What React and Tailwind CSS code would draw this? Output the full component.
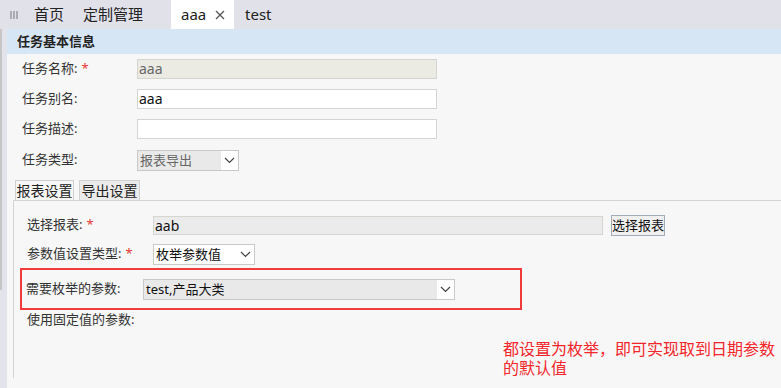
import React from 'react';

const font = { fontFamily: '"Noto Sans", "Noto Sans CJK SC", sans-serif' };
const noteFont = { fontFamily: '"Liberation Sans", "Noto Sans CJK SC", sans-serif' };

const Chevron = () => (
  <svg width="11" height="7" viewBox="0 0 11 7" fill="none">
    <path d="M1 1l4.5 4.5L10 1" stroke="#444" strokeWidth="1.2" />
  </svg>
);

const Select = ({ value, width, light, dark }) => (
  <div
    className={`flex h-[21px] items-stretch border border-[#c9c9c9] ${light ? 'bg-white' : 'bg-[#e9e9e9]'}`}
    style={{ width }}
  >
    <span className={`flex-1 truncate pl-[2px] text-[13px] leading-[19px] ${light || dark ? 'text-[#111]' : 'text-[#666]'}`}>{value}</span>
    <span className="flex w-[17px] items-center justify-center bg-white">
      <Chevron />
    </span>
  </div>
);

const Label = ({ children, required, width }) => (
  <div className="flex shrink-0 items-center text-[13px] text-[#333]" style={{ width }}>
    {children}
    {required && <span className="ml-[4px] text-[#e53935]">*</span>}
  </div>
);

export default function App() {
  return (
    <div className="flex h-[388px] w-[781px] overflow-hidden bg-[#f7f7f7]" style={font}>
      {/* left strip */}
      <div className="flex w-[7px] shrink-0 flex-col bg-[#e3e3eb]">
        <div className="mt-[12px] h-[278px] w-[2px] bg-[#c6c6c6]" />
      </div>

      <div className="flex min-w-0 flex-1 flex-col">
        {/* top tabs */}
        <div className="-ml-[7px] flex h-[29px] shrink-0 items-stretch bg-[#e1e1ea] text-[15px] text-[#222]">
          <div className="ml-[3px] flex w-[27px] items-center pl-[7px]">
            <svg width="8" height="8" viewBox="0 0 8 8">
              <path d="M1 0v8M4 0v8M7 0v8" stroke="#777" strokeWidth="1" />
            </svg>
          </div>
          <div className="flex items-center pl-[4px] pr-[19px]">首页</div>
          <div className="flex items-center pr-[28px]">定制管理</div>
          <div className="flex w-[63px] items-center bg-white pl-[10px]">
            aaa
            <svg className="ml-[9px]" width="10" height="10" viewBox="0 0 10 10">
              <path d="M1 1l8 8M9 1l-8 8" stroke="#555" strokeWidth="1.3" />
            </svg>
          </div>
          <div className="flex items-center pl-[11px]">test</div>
        </div>

        {/* section header */}
        <div className="flex h-[25px] shrink-0 items-center bg-[#d6e6f5] pl-[10px] text-[13px] font-bold text-[#222]">
          任务基本信息
        </div>

        {/* base info rows */}
        <div className="flex flex-col pl-[15px]">
          <div className="flex h-[30px] items-center">
            <Label required width="115px">任务名称:</Label>
            <div className="h-[20px] w-[300px] border border-[#d4d4d0] bg-[#ebebe4] pl-[1px] text-[14px] leading-[18px] text-[#666]">aaa</div>
          </div>
          <div className="flex h-[30px] items-center">
            <Label width="115px">任务别名:</Label>
            <div className="h-[20px] w-[300px] border border-[#d4d4d4] bg-white pl-[1px] text-[14px] leading-[18px] text-[#111]">aaa</div>
          </div>
          <div className="flex h-[30px] items-center">
            <Label width="115px">任务描述:</Label>
            <div className="h-[20px] w-[300px] border border-[#d4d4d4] bg-white" />
          </div>
          <div className="flex h-[32px] items-center">
            <Label width="115px">任务类型:</Label>
            <Select value="报表导出" width="102px" />
          </div>
        </div>

        {/* sub tabs */}
        <div className="ml-[6px] mt-[4px] flex flex-col">
          <div className="flex items-end gap-[5px] pl-[2px]">
            <div className="-mb-px h-[21px] w-[59px] border border-b-0 border-[#d0d0d0] bg-[#f7f7f7] text-center text-[14px] leading-[20px] text-[#222]">
              报表设置
            </div>
            <div className="h-[20px] w-[61px] border border-b-0 border-[#d0d0d0] bg-[#ebebeb] text-center text-[14px] leading-[20px] text-[#222]">
              导出设置
            </div>
          </div>

          <div className="flex flex-col border-l border-t border-[#d4d4d4] pt-[9px]">
            <div className="flex h-[30px] items-center pl-[13px]">
              <Label required width="126px">选择报表:</Label>
              <div className="h-[19px] w-[450px] border border-[#d6d6d0] bg-[#ebebeb] pl-[1px] text-[14px] leading-[17px] text-[#111]">aab</div>
              <button className="ml-[8px] h-[21px] w-[54px] whitespace-nowrap border border-[#a3adb8] bg-[#f0f0f0] p-0 text-[13px] leading-[19px] text-[#111]">
                选择报表
              </button>
            </div>
            <div className="flex h-[28px] items-center pl-[13px]">
              <Label required width="126px">参数值设置类型:</Label>
              <Select value="枚举参数值" width="102px" light />
            </div>

            <div className="ml-[6px] flex h-[42px] w-[502px] items-center border-2 border-[#f23a3a] pl-[4px]">
              <Label width="117px">需要枚举的参数:</Label>
              <Select value="test,产品大类" width="312px" dark />
            </div>

            <div className="flex h-[20px] items-center pl-[13px]">
              <Label width="126px">使用固定值的参数:</Label>
            </div>

            <div className="mt-[10px] flex flex-col pl-[489px] text-[16px] leading-[19px] text-[#f2262a]" style={noteFont}>
              <span>都设置为枚举，即可实现取到日期参数</span>
              <span>的默认值</span>
            </div>
          </div>
        </div>
      </div>
    </div>
  );
}
